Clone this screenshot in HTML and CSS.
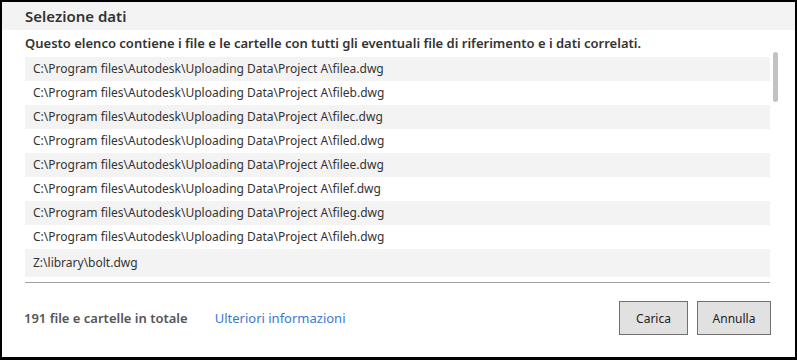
FILE: index.html
```html
<!DOCTYPE html>
<html lang="it">
<head>
  <meta charset="UTF-8">
  <meta name="viewport" content="width=device-width, initial-scale=1.0">
  <title>Selezione dati</title>
  <link rel="stylesheet" href="styles.css">
</head>
<body>

  <div class="dialog">
    <div class="dialog-header">
      <h2>Selezione dati</h2>
    </div>
    <div class="dialog-body">
      <p class="intro">Questo elenco contiene i file e le cartelle con tutti gli eventuali file di riferimento e i dati correlati.</p>
      <div class="list-wrap">
        <ul class="file-list">
          <li>C:\Program files\Autodesk\Uploading Data\Project A\filea.dwg</li>
          <li>C:\Program files\Autodesk\Uploading Data\Project A\fileb.dwg</li>
          <li>C:\Program files\Autodesk\Uploading Data\Project A\filec.dwg</li>
          <li>C:\Program files\Autodesk\Uploading Data\Project A\filed.dwg</li>
          <li>C:\Program files\Autodesk\Uploading Data\Project A\filee.dwg</li>
          <li>C:\Program files\Autodesk\Uploading Data\Project A\filef.dwg</li>
          <li>C:\Program files\Autodesk\Uploading Data\Project A\fileg.dwg</li>
          <li>C:\Program files\Autodesk\Uploading Data\Project A\fileh.dwg</li>
          <li>Z:\library\bolt.dwg</li>
        </ul>
        <div class="scrollbar"><div class="thumb"></div></div>
      </div>
      <div class="divider"></div>
      <div class="dialog-footer">
        <span class="total">191 file e cartelle in totale</span>
        <a href="#" class="more-info">Ulteriori informazioni</a>
        <div class="buttons">
          <button type="button" class="btn btn-load">Carica</button>
          <button type="button" class="btn btn-cancel">Annulla</button>
        </div>
      </div>
    </div>
  </div>

</body>
</html>
```

FILE: styles.css
```css
body {
  font-family: "Noto Sans", "Open Sans", sans-serif;
  margin: 0;
  padding: 2px 2px 3px 2px;
  background-color: #000;
  height: 360px;
  box-sizing: border-box;
  overflow: hidden;
}
.dialog {
  background-color: white;
  height: 355px;
  display: flex;
  flex-direction: column;
}
.dialog-header {
  background-color: #f3f3f3;
  height: 28px;
  padding-left: 23px;
  display: flex;
  align-items: center;
}
.dialog-header h2 {
  margin: 0;
  font-size: 15px;
  font-weight: 600;
  color: #333;
}
.dialog-body {
  padding: 0 24px 0 23px;
  display: flex;
  flex-direction: column;
}
.intro {
  margin: 0;
  padding-top: 5px;
  height: 17px;
  line-height: 17px;
  font-size: 13px;
  font-weight: 600;
  color: #333;
}
.list-wrap {
  display: flex;
  gap: 3px;
}
.file-list {
  list-style: none;
  margin: 5px 0 0 0;
  padding: 0;
  width: 745px;
  flex-shrink: 0;
}
.file-list li {
  height: 24px;
  line-height: 24px;
  padding-left: 8px;
  font-size: 12px;
  color: #333;
  white-space: nowrap;
}
.file-list li:nth-child(odd) {
  background-color: #f3f3f3;
}
.file-list li:last-child {
  height: 28px;
  line-height: 27px;
}
.scrollbar {
  width: 5px;
  flex-shrink: 0;
}
.thumb {
  height: 50px;
  background-color: #c2c2c2;
  border-radius: 3px;
}
.divider {
  margin-top: 5px;
  width: 745px;
  border-top: 1px solid #a0a0a0;
}
.dialog-footer {
  display: flex;
  align-items: center;
  margin-top: 18px;
  height: 34px;
}
.total {
  font-size: 13px;
  font-weight: 600;
  color: #555;
  margin-left: -1px;
}
.more-info {
  margin-left: 27px;
  font-size: 13px;
  color: #3b78d6;
  text-decoration: none;
}
.buttons {
  margin-left: auto;
  display: flex;
  gap: 9px;
}
.btn {
  height: 34px;
  font-family: inherit;
  font-size: 12px;
  color: #222;
  background-color: #e1e1e1;
  border: 1px solid #707070;
  padding: 0;
}
.btn-load {
  width: 69px;
}
.btn-cancel {
  width: 74px;
}
```
